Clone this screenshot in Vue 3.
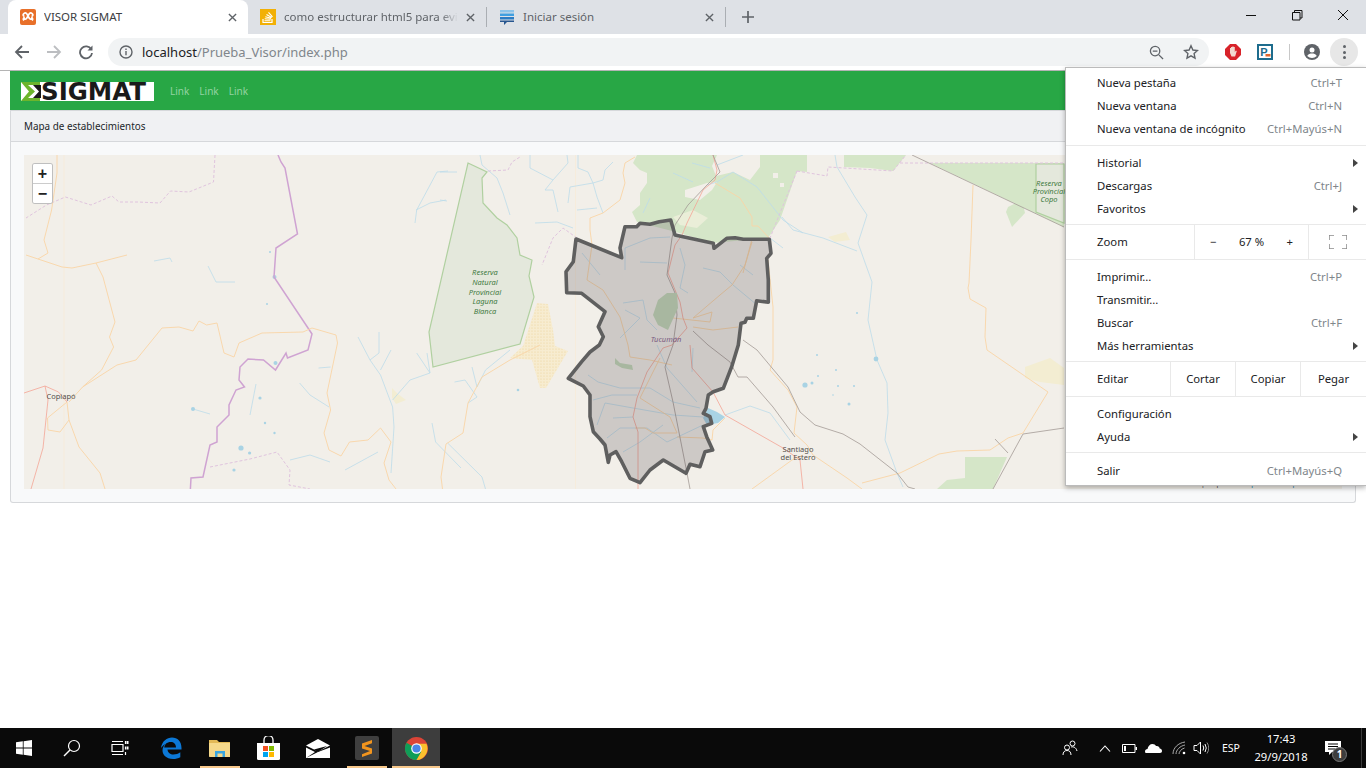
<template>
  <div class="screen">
    <header class="tabstrip">
      <div class="tab tab--active">
        <svg class="favicon" viewBox="0 0 16 16">
          <rect width="16" height="16" rx="2" fill="#e8702a" />
          <path d="M4 4.5c2-1.5 3 .5 4 2.5s2 4 4 2.5M12 4.5c-2-1.5-3 .5-4 2.5s-2 4-4 2.5M4 4.5c-1.5 1 -1 2.500 .5 3M12 4.500c1.500 1 1 2.500 -.5 3M4 11.500c-1 -1 -1 -2 .5 -3.500M12 11.500c1 -1 1 -2 -.5 -3.500" fill="none" stroke="#fff" stroke-width="1.700" />
        </svg>
        <span class="tab__title">VISOR SIGMAT</span>
        <svg class="tab__close" viewBox="0 0 10 10"><path d="M1 1l8 8M9 1l-8 8" /></svg>
      </div>
      <div class="tab">
        <svg class="favicon" viewBox="0 0 16 16">
          <rect width="16" height="16" fill="#f2b005" />
          <path d="M3 10v3.500h9V10" fill="none" stroke="#fff" stroke-width="1.200" />
          <path d="M4.500 11.800h6M4.700 9.800l6 .5M5.300 7.800l5.800 1.500M6.500 5.500l5.200 3M8.500 3.300l4 4.500" stroke="#fff" stroke-width="1.100" fill="none" />
        </svg>
        <span class="tab__title tab__title--fade">como estructurar html5 para evit</span>
        <svg class="tab__close" viewBox="0 0 10 10"><path d="M1 1l8 8M9 1l-8 8" /></svg>
      </div>
      <div class="tab tab--sep">
        <svg class="favicon" viewBox="0 0 16 16">
          <path d="M1 1h14v2.500H1z" fill="#8cc4ea" />
          <path d="M1 4.500h14V7H1z" fill="#3f9fe0" />
          <path d="M1 8h14v2.500H1z" fill="#2b7cc4" />
          <path d="M1 11.500h14V13H8l-3 3v-3H1z" fill="#27568f" />
        </svg>
        <span class="tab__title">Iniciar sesión</span>
        <svg class="tab__close" viewBox="0 0 10 10"><path d="M1 1l8 8M9 1l-8 8" /></svg>
      </div>
      <div class="tab-sep"></div>
      <svg class="newtab" viewBox="0 0 12 12"><path d="M6 0v12M0 6h12" /></svg>
      <div class="winctl">
        <svg viewBox="0 0 46 12"><path d="M18 6.500h10" /></svg>
        <svg viewBox="0 0 46 12"><path d="M18.500 3.500h7.500v7.500h-7.500zM20.500 3.500v-2h7.500v7.500h-2" /></svg>
        <svg viewBox="0 0 46 12"><path d="M18 1l10 10M28 1l-10 10" /></svg>
      </div>
    </header>

    <div class="toolbar">
      <svg class="navbtn" viewBox="0 0 16 16"><path d="M15 8H2M8 2L2 8l6 6" stroke="#5f6368" /></svg>
      <svg class="navbtn" viewBox="0 0 16 16"><path d="M1 8h13M8 2l6 6-6 6" stroke="#bcbec1" /></svg>
      <svg class="navbtn" viewBox="0 0 16 16">
        <path d="M13.300 5.500A6 6 0 1 0 14 9" stroke="#5f6368" />
        <path d="M14.500 1.500v5h-5z" fill="#5f6368" />
      </svg>
      <div class="omnibox">
        <svg class="omnibox__info" viewBox="0 0 14 14">
          <circle cx="7" cy="7" r="6" fill="none" stroke="#5f6368" stroke-width="1.400" />
          <path d="M7 6v4.300M7 3.500v1.400" stroke="#5f6368" stroke-width="1.400" />
        </svg>
        <span class="url"><b>localhost</b>/Prueba_Visor/index.php</span>
        <svg class="omnibox__zoom" viewBox="0 0 16 16">
          <circle cx="6.500" cy="6.500" r="5" fill="none" stroke="#5f6368" stroke-width="1.400" />
          <path d="M10.500 10.500L15 15M4 6.500h5" stroke="#5f6368" stroke-width="1.400" />
        </svg>
        <svg class="omnibox__star" viewBox="0 0 16 16">
          <path d="M8 1.800l1.900 4.200 4.600.5-3.400 3.100.9 4.500L8 11.800l-4 2.300.9-4.500L1.500 6.500l4.600-.5z" fill="none" stroke="#5f6368" stroke-width="1.400" />
        </svg>
      </div>
      <svg class="ext ext--stop" viewBox="0 0 16 16">
        <path d="M5 0h6l5 5v6l-5 5H5l-5-5V5z" fill="#d8232a" />
        <path d="M5 7V4h1v3-4h1.300v4-4.500h1.300V7 3h1.200v5l1-1.500 1 .5-1.700 5.500H6.500L5 9z" fill="#f3d9d0" />
      </svg>
      <svg class="ext ext--pub" viewBox="0 0 16 16">
        <rect width="16" height="16" fill="#1d6c8d" />
        <rect x="2" y="2" width="12" height="12" fill="#fff" />
        <text x="3.200" y="12" class="ext__p">P</text>
        <rect x="8.500" y="10" width="5" height="2.500" fill="#e0662a" />
      </svg>
      <div class="toolbar__sep"></div>
      <svg class="avatar" viewBox="0 0 16 16">
        <circle cx="8" cy="8" r="8" fill="#5f6368" />
        <circle cx="8" cy="6" r="2.500" fill="#fff" />
        <path d="M3.200 12c1-2 3-2.500 4.800-2.500s3.800.5 4.800 2.500c-3 2.500-6.600 2.500-9.600 0z" fill="#fff" />
      </svg>
      <div class="dots"><i></i><i></i><i></i></div>
    </div>

    <main class="page">
      <nav class="navbar">
        <div class="logo">
          <svg class="logo__sigma" viewBox="0 0 20 19">
            <path d="M12 3h8v13h-8l6-6.500z" fill="#1a1a1a" />
            <path d="M0 0h19v3H7l7 6.500L7 16h12v3H0l8-9.500z" fill="#6cb52c" />
          </svg>
          <span class="logo__text">SIGMAT</span>
        </div>
        <a class="navlink">Link</a>
        <a class="navlink">Link</a>
        <a class="navlink">Link</a>
      </nav>

      <section class="card">
        <div class="card__header">Mapa de establecimientos</div>
        <div class="card__body">
          <div class="map">
            <svg class="map__svg" viewBox="24 155 1318 334">
              <defs>
                <pattern id="sand" width="3" height="3" patternUnits="userSpaceOnUse">
                  <rect width="3" height="3" fill="#f7ecd0" />
                  <circle cx="1" cy="1" r=".6" fill="#ecd49a" />
                </pattern>
              </defs>

              <polygon class="forest" points="637,155 633,163 640,170 647,173 647,183 640,193 640,205 632,212 637,222 676,232 713,243 768,238 780,220 797,171 807,172 807,155" />
              <polygon class="hole" points="717,155 760,155 760,167 750,180 733,172 716,176 712,166" />
              <polygon class="hole" points="685,190 707,183 717,182 712,190 700,200 685,197" />
              <polygon class="hole hole--light" points="673,217 693,210 708,218 697,228 680,225" />
              <polygon class="hole" points="773,173 778,173 778,178 773,178" />
              <polygon class="hole" points="780,183 784,183 784,187 780,187" />
              <polygon class="forest" points="844,155 906,155 893,171 870,168 844,167" />
              <polygon class="forest" points="930,163 1064,163 1064,227" />
              <polygon class="forest" points="1022,200 1025,213 1012,227 1006,212 1008,207" />
              <polygon class="forest" points="965,457 1007,457 993,489 937,489 947,480 965,478" />
              <polygon class="reserve" points="1036,164 1064,164 1064,223 1036,212" />
              <polygon class="reserve" points="468,163 487,172 482,178 483,203 497,218 507,225 517,238 520,255 532,260 529,276 534,297 520,344 433,367 429,332" />
              <polygon class="sand" points="537,303 548,304 553,330 555,346 568,351 546,388 540,388 532,360 510,358 523,346" />
              <polygon class="sandlight" points="392,388 398,394 406,400 396,404 392,398" />
              <polygon class="sandlight" points="828,237 846,232 850,240 835,242" />
              <polygon class="sandlight" points="1025,367 1050,358 1064,368 1064,385 1040,382 1025,378" />
              <rect class="faint" x="63.500" y="155" width="1" height="334" />
              <rect class="faint" x="575" y="155" width="1" height="334" />

              <polyline v-for="(p, i) in rivers" :key="'r' + i" class="river" :points="p" />
              <polygon v-for="(p, i) in lakes" :key="'l' + i" class="lake" :points="p" />
              <circle v-for="(c, i) in ponds" :key="'p' + i" class="lake" :cx="c[0]" :cy="c[1]" :r="c[2]" />

              <polyline v-for="(p, i) in borders" :key="'d' + i" class="border-dash" :points="p" />
              <polyline class="border-main" points="278,155 281,162 285,168 297.500,234 276,248 274,277 312,334 308,350 287.500,358 286,353 275.500,370 263.500,360 248,359 240,367 239,380 244.500,387 236,390 229,405 229,415 217,427 217,442 210,445 203,477 191,478 190.400,489" />

              <polyline v-for="(p, i) in roads" :key="'o' + i" class="road" :points="p" />
              <polyline v-for="(p, i) in redRoads" :key="'e' + i" class="road-red" :points="p" />
              <polyline v-for="(p, i) in grayRoads" :key="'g' + i" class="road-gray" :points="p" />

              <polygon class="forest-in" points="667,293 677,293 678,308 668,330 658,325 653,315 658,300" />
              <polygon class="forest-in" points="615,358 620,363 632,365 633,370 622,368 615,364" />

              <polygon class="province" :points="tucuman" />

              <text class="label" x="61" y="399" text-anchor="middle">Copiapó</text>
              <text class="label" x="798" y="452" text-anchor="middle">Santiago</text>
              <text class="label" x="798" y="460" text-anchor="middle">del Estero</text>
              <text class="label label--city" x="666" y="342" text-anchor="middle">Tucumán</text>
              <text class="label label--park" x="485" y="275" text-anchor="middle">Reserva</text>
              <text class="label label--park" x="485" y="285" text-anchor="middle">Natural</text>
              <text class="label label--park" x="485" y="294.500" text-anchor="middle">Provincial</text>
              <text class="label label--park" x="485" y="304" text-anchor="middle">Laguna</text>
              <text class="label label--park" x="485" y="314" text-anchor="middle">Blanca</text>
              <text class="label label--park" x="1049" y="186" text-anchor="middle">Reserva</text>
              <text class="label label--park" x="1049" y="194" text-anchor="middle">Provincial</text>
              <text class="label label--park" x="1049" y="202" text-anchor="middle">Copo</text>
            </svg>
            <div class="zoomctl">
              <button class="zoomctl__btn">+</button>
              <button class="zoomctl__btn">−</button>
            </div>
            <div class="attribution"><span>Leaflet</span> | Map data © <span>OpenStreetMap</span> contributors</div>
          </div>
        </div>
      </section>
    </main>

    <div class="menu">
      <div class="menu__group menu__group--first">
        <div class="menu__row">Nueva pestaña<span>Ctrl+T</span></div>
        <div class="menu__row">Nueva ventana<span>Ctrl+N</span></div>
        <div class="menu__row">Nueva ventana de incógnito<span>Ctrl+Mayús+N</span></div>
      </div>
      <div class="menu__group">
        <div class="menu__row menu__row--sub">Historial</div>
        <div class="menu__row">Descargas<span>Ctrl+J</span></div>
        <div class="menu__row menu__row--sub">Favoritos</div>
      </div>
      <div class="menu__split menu__split--zoom">
        <div class="menu__cell menu__cell--label">Zoom</div>
        <div class="menu__cell menu__cell--zoom"><i>−</i><em>67 %</em><i>+</i></div>
        <div class="menu__cell">
          <svg class="fullscreen" viewBox="0 0 18 14"><path d="M0 5V0h5M13 0h5v5M18 9v5h-5M5 14H0V9" /></svg>
        </div>
      </div>
      <div class="menu__group">
        <div class="menu__row">Imprimir...<span>Ctrl+P</span></div>
        <div class="menu__row">Transmitir...</div>
        <div class="menu__row">Buscar<span>Ctrl+F</span></div>
        <div class="menu__row menu__row--sub">Más herramientas</div>
      </div>
      <div class="menu__split menu__split--edit">
        <div class="menu__cell menu__cell--label">Editar</div>
        <div class="menu__cell">Cortar</div>
        <div class="menu__cell">Copiar</div>
        <div class="menu__cell">Pegar</div>
      </div>
      <div class="menu__group">
        <div class="menu__row">Configuración</div>
        <div class="menu__row menu__row--sub">Ayuda</div>
      </div>
      <div class="menu__group menu__group--last">
        <div class="menu__row">Salir<span>Ctrl+Mayús+Q</span></div>
      </div>
    </div>

    <footer class="taskbar">
      <div class="task task--sys">
        <svg width="16" height="16" viewBox="0 0 16 16"><path d="M0 2.300l6.800-1v6.300H0zM7.600 1.200L16 0v7.600H7.600zM0 8.400h6.800v6.300L0 13.700zM7.600 8.400H16V16l-8.400-1.200z" fill="#fff" /></svg>
      </div>
      <div class="task task--sys">
        <svg width="18" height="18" viewBox="0 0 18 18"><circle cx="11" cy="7" r="5.500" fill="none" stroke="#fff" stroke-width="1.200" /><path d="M7 11l-6 6" stroke="#fff" stroke-width="1.400" /></svg>
      </div>
      <div class="task task--sys task--gap">
        <svg width="18" height="16" viewBox="0 0 18 16"><path d="M1 4.500h11v7H1zM1 1.500h11M1 14.500h11M14.500 1v3M14.500 6.500v3M14.500 12v3" fill="none" stroke="#fff" stroke-width="1.200" /><path d="M15.500 6.500h2v3h-2zM15.500 1h2v3h-2z" fill="#fff" /></svg>
      </div>
      <div class="task">
        <svg width="22" height="22" viewBox="0 0 22 22">
          <path d="M1 11C2 4 7 .5 12 .5c5.500 0 9.500 4 9.500 10.500v1.500H7.500c.3 3.500 3 5 5.800 5 2.700 0 5-1 7-2.300v5c-2 1.200-4.500 1.800-7.300 1.800-7 0-10.500-4.500-10.500-8.500 0-3 1.500-5.500 4-7.500-1.500 2-2 3-2.300 4.500h11.800c0-3-1.700-5.500-5-5.500C8.500 4.500 4 7 1 11z" fill="#0c78d6" />
        </svg>
      </div>
      <div class="task task--open">
        <svg width="22" height="20" viewBox="0 0 22 20">
          <path d="M0 2h8l2 2h11v14.500H0z" fill="#e3b956" />
          <path d="M0 5h21v14H1q-1 0-1-1z" fill="#f6d98a" />
          <path d="M6 19v-6h10v6h-2.500v-3.500h-5V19z" fill="#3ba7e0" />
        </svg>
      </div>
      <div class="task">
        <svg width="23" height="24" viewBox="0 0 23 24">
          <path d="M7 7V4a4.500 4.500 0 0 1 9 0v3" fill="none" stroke="#fff" stroke-width="1.300" />
          <path d="M0 7h23v15.500q0 1.500-1.500 1.500h-20Q0 24 0 22.500z" fill="#fff" />
          <rect x="6" y="10" width="5" height="5" fill="#f25022" />
          <rect x="12" y="10" width="5" height="5" fill="#7fba00" />
          <rect x="6" y="16" width="5" height="5" fill="#00a4ef" />
          <rect x="12" y="16" width="5" height="5" fill="#ffb900" />
        </svg>
      </div>
      <div class="task">
        <svg width="24" height="19" viewBox="0 0 24 19">
          <path d="M0 6.500L12 0l12 6.500-12 6z" fill="#fff" />
          <path d="M0 8.500l9 4.500L0 19zM24 8.500V19H0l12-6z" fill="#fff" />
          <path d="M8 10.500l13-3.500-9 6z" fill="#0a0a0a" />
        </svg>
      </div>
      <div class="task task--open">
        <svg width="24" height="24" viewBox="0 0 24 24">
          <rect width="24" height="24" rx="2" fill="#3f3f3f" />
          <path d="M17 4L7 7.500v5l8 2.500-8 3.200V21l10-3.500v-5L9.500 10 17 7.200z" fill="#f2951e" />
        </svg>
      </div>
      <div class="task task--open task--active">
        <svg width="23" height="23" viewBox="0 0 24 24">
          <circle cx="12" cy="12" r="12" fill="#db4437" />
          <path d="M12 12L1.600 6A12 12 0 0 0 12 24l5.500-9z" fill="#0f9d58" />
          <path d="M12 7h10.400A12 12 0 0 1 12 24l5-8.500z" fill="#fbc02d" />
          <circle cx="12" cy="12" r="5.500" fill="#fff" />
          <circle cx="12" cy="12" r="4.300" fill="#4a86e8" />
        </svg>
      </div>
      <div class="tray">
        <svg class="tray__people" width="16" height="16" viewBox="0 0 16 16"><circle cx="10.500" cy="3.500" r="2.500" fill="none" stroke="#fff" /><circle cx="5" cy="7.500" r="2.500" fill="none" stroke="#fff" /><path d="M1 15c0-3 1.500-4.500 4-4.500S9 12 9 15M9 7c2-.5 5 0 6 4" fill="none" stroke="#fff" /></svg>
        <svg class="tray__chev" width="12" height="7" viewBox="0 0 12 7"><path d="M1 6.500L6 1l5 5.500" fill="none" stroke="#fff" stroke-width="1.100" /></svg>
        <svg class="tray__batt" width="15" height="9" viewBox="0 0 15 9"><path d="M.500.500h12.500v8H.500z" fill="none" stroke="#fff" /><path d="M2 2h2v5H2z" fill="#fff" /><path d="M13.500 3H15v3h-1.500z" fill="#fff" /></svg>
        <svg class="tray__cloud" width="17" height="10" viewBox="0 0 17 10"><path d="M1 10q-1 0-1-1.500C0 7 1 6 2.500 6 3 3 5 1 7.500 1c1.500 0 3 .8 3.500 2 2-.5 3.500.7 3.700 2.500C16 5.500 17 6.800 17 8c0 1.200-.7 2-2 2z" fill="#fff" /></svg>
        <svg class="tray__wifi" width="14" height="14" viewBox="0 0 14 14"><path d="M1 13C1 7 6 2 13 1M4 13c0-4 4-8 9-9M7 13c0-2 2-5 5.500-6" fill="none" stroke="#aaa" /><circle cx="12" cy="12" r="1.300" fill="#fff" /></svg>
        <svg class="tray__vol" width="16" height="14" viewBox="0 0 16 14"><path d="M1 4.500h3L7.500 1v12L4 9.500H1z" fill="none" stroke="#fff" /><path d="M10 4.500q1.500 2.500 0 5M12 3q2.500 4 0 8" fill="none" stroke="#fff" /><path d="M14 1.500q3.500 5.500 0 11" fill="none" stroke="#888" /></svg>
        <span class="tray__lang">ESP</span>
        <div class="tray__clock"><span>17:43</span><span>29/9/2018</span></div>
        <div class="tray__notif">
          <svg width="16" height="14" viewBox="0 0 16 14"><path d="M0 0h16v11H7l-3 3v-3H0z" fill="#fff" /><path d="M3 3h10M3 5.500h10M3 8h7" stroke="#000" /></svg>
          <b class="tray__badge">1</b>
        </div>
      </div>
    </footer>
  </div>
</template>

<script setup>
// borde de la provincia, coordenadas de pantalla
const tucuman =
  "576,239 621.700,257.700 620,248 625,226.700 636.700,226.700 640,223.300 650,224.300 659.300,221.700 670.700,220 675,235 713.300,243.300 714,248.300 726.700,238.300 735,237.700 743.300,239.300 769.300,239.300 771,253.300 766.700,258.300 768.300,280 768.300,302.300 756.700,300.700 753.300,318.300 746.700,318.300 745,322.300 741,323.300 738.300,345 731.700,366.700 723.300,388.300 713.300,391.700 708.300,395 706,408.300 703.300,413.300 710,416.700 711.700,423.300 703.300,426.700 706.700,436.700 712.700,450 705,451.700 700,466.700 690,464.300 686,473.300 663.300,460 650,470 640,482.700 630,478.300 621.700,461.700 616,451.700 610,455 608.300,462.300 605,445 600,439 593.300,431.700 590,416.700 590,395 583.300,386 568.300,378.300 581.700,361.700 590,352 599.300,345 603.300,336.700 598.300,326.700 605,311.700 581.700,293.300 566.700,292.700 566,271.700 573.300,261.700";

const borders = [
  "215,155 213.500,182 189,192 170.500,191 160,203 138,202 119,202 112,196 91,205 65.400,197 46.500,205 26,218",
  "577,238 563,228 553,238 542,265",
  "488,171 508,170 512,162 520,157",
  "797,171 827,176 828,167 893,171 906,155",
  "900,163 1064,163",
  "797,171 770,238",
  "210,467 250,459 277,452 290,470 289,485 310,489",
];

const roads = [
  "57,155 57,173 51.600,210 44,240 48,253 38,259 26,255",
  "38,259 62,267 72,268 96,263 127,255",
  "96,263 103,277 115,322 109.500,337 113.600,347 101.600,370 82.600,387 69,402",
  "82.600,387 117,365 136,360 162,328 179,327 193,331 199,321 206.600,325 217,323 224,353 234,357 239,343 262,333 303,332 312,328 336,335 337.500,343 327,393 330.600,410 324,433 329,450 341,456 349.500,442 368,440 380.500,428 391,442 384,463 389,480 396,489",
  "67,402 69,420 60,432 48,430 47.500,418 67,402",
  "69,420 79,447 100,473 105,489",
  "540,345 510,360 482,377 468,403 463,433 446,444 441,477 442.500,489",
  "635,157 625,163 623,173 625,183 620,200 603,213 590,218 590,230 592,245 587,280 603,290 620,317 628,345 630,357 650,360 672,365",
  "673,318 710,322 712,312 693,318 720,295 732,285 745,265 752,242",
  "693,327 713,330 738,327",
  "660,358 640,398 670,417 677,433 653,433 645,428 635,428",
  "677,437 703,438 712,440 713,430 725,418",
  "715,183 740,198 752,217 752,226 758,226 770,239 752,239 743,273",
  "973,185 971,240 969,283 968,288 970,299 986,308 985,337 987,350 1048,392 1023,433 1008,438 990,450 957,451 939,454 900,473 862,483",
  "768,260 773,307 773,360 770,370 788,390 797,407 794,433 807,445 813,455 847,478 862,489",
  "752,489 792,460 803,455",
];

const redRoads = [
  "713,155 717,170 715,180 703,190 687,223 682,235 675,245 668,273 680,302 683,318 687,328 672,345 663,348 647,372 637,398 633,417 638,432 638,462 638,489",
  "690,345 692,368 713,392 725,415 783,448 800,460 803,489",
  "24,393 45,386 58.500,392 67,402",
  "45,386 48,400 43,448 31,489",
];

const grayRoads = [
  "713,155 720,172 707,185 688,205 675,225 672,238 667,275 675,293 677,315 673,345 665,367 673,402 687,473 690,489",
  "693,331 708,345 730,362 738,377 747,377 773,407 795,437",
  "743,340 757,350 788,387 800,412 815,425 843,434 860,444 897,473 908,487 915,489",
  "912,155 1064,227",
  "1064,428 1023,434 993,489",
  "995,439 1008,453",
];

const rivers = [
  "358,337 370,360 380.500,375 392.600,407 394,427 391,473",
  "379,332 379,353 370,360",
  "391,350 380.500,370",
  "427,353 430,373 410,380 392.600,400",
  "416.700,353 430,373",
  "448,171 437,172 416.700,210 415,223",
  "416,210 430,203 446,200",
  "480,155 482,165 497,178 503,193 510,215",
  "454.500,382 465,380 477,397 468,403",
  "510,350 485.500,370 477,387 472,367",
  "432,423 435.600,442 461,468",
  "447.600,443 482,477 485.500,489",
  "299.600,383 310,395 329,407",
  "318.500,368 330.600,367",
  "193,409 210,414",
  "154,261 170,258 172,262",
  "208,266 216,282 235,282",
  "440,172 457,172",
  "440,200 447,201",
  "530,155 530,168 553,180 545,190 553,190 558,212",
  "567,155 568,163 553,180",
  "578,155 578,168 588,172 593,183 570,187 568,203",
  "593,183 603,180 605,170 613,162",
  "593,183 597,197 603,213",
  "577,210 597,208",
  "535,223 557,222 573,228",
  "650,198 643,213",
  "673,173 693,182",
  "692,163 710,168",
  "707,185 717,182 733,172 757,187 783,220 803,233",
  "717,165 743,155",
  "588,375 598,382 620,388 650,388 673,402 700,408",
  "593,400 612,395 637,395",
  "597,425 605,403 633,408 673,415 703,417",
  "613,418 633,417",
  "607,438 620,428 647,428 667,442 703,425",
  "623,452 640,442 663,425",
  "657,345 667,368 697,402",
  "692,372 693,348",
  "625,270 625,248 650,238 670,237",
  "640,262 667,263",
  "582,253 600,275",
  "623,303 643,300 647,320 657,330",
  "625,310 640,318 620,338",
  "703,268 720,272 733,285 757,305",
  "740,265 753,275",
  "680,248 685,265 680,288 688,293",
  "835,155 837,167 855,197 867,215 858,243 872,282 868,320 877,360 887,383 888,413 885,440 897,473 903,487",
  "782,217 793,230 823,238 857,251",
  "770,238 783,248",
  "725,415 750,406 770,413 790,440",
  "250,415 256,384",
  "290,460 310,455 330,462",
  "345,470 378,452",
];

const lakes = ["708,408 717,412 725,417 718,423 707,425 703,418"];

const ponds = [
  [270, 252, 1], [274.5, 277, 2], [267, 304, 1], [193, 409, 2], [260, 398, 1.6], [241, 448, 2.6], [249.6, 453, 1.6],
  [265, 423, 1.2], [274.5, 433, 1.2], [234, 470, 1.6], [518, 390, 1.3], [275.5, 363, 2], [876, 359, 2.4], [857, 313, 1],
  [805, 385, 2.6], [812, 383, 1.5], [817, 355, 1], [836, 370, 1], [818, 376, 1], [838, 386, 1], [854, 386, 1],
  [849, 404, 1.5], [833, 395, 0.8],
];
</script>

<style>
html,
body {
  margin: 0;
  background: #fff;
}
</style>

<style scoped>
.screen {
  position: relative;
  display: flex;
  flex-direction: column;
  width: 1366px;
  height: 768px;
  overflow: hidden;
  font-family: "Noto Sans", sans-serif;
  color: #202124;
}

/* pestañas */
.tabstrip {
  display: flex;
  align-items: center;
  height: 34px;
  padding-left: 8px;
  background: #dee1e6;
  flex: none;
}

.tab {
  display: flex;
  align-items: center;
  width: 238px;
  height: 34px;
  padding: 0 11px 0 12px;
  box-sizing: border-box;
  font-size: 11.500px;
  color: #5f6368;
  flex: none;
}

.tab--active {
  width: 240px;
  background: #fff;
  border-radius: 8px 8px 0 0;
  color: #3c4043;
}

.tab--sep,
.tab-sep {
  border-left: 1px solid #aaaeb3;
  background-clip: padding-box;
}

.tab--sep {
  height: 20px;
  width: 239px;
}

.tab-sep {
  width: 0;
  height: 20px;
}

.favicon {
  width: 16px;
  height: 16px;
  flex: none;
}

.tab__title {
  margin-left: 8px;
  padding-bottom: 2px;
  flex: 1;
  white-space: nowrap;
  overflow: hidden;
}

.tab__title--fade {
  -webkit-mask-image: linear-gradient(90deg, #000 90%, transparent);
  mask-image: linear-gradient(90deg, #000 90%, transparent);
}

.tab__close {
  width: 9px;
  height: 9px;
  margin-left: 8px;
  flex: none;
}

.tab__close path {
  stroke: #5f6368;
  stroke-width: 1.500;
}

.newtab {
  width: 12px;
  height: 12px;
  margin-left: 16px;
}

.newtab path {
  stroke: #5f6368;
  stroke-width: 1.700;
}

.winctl {
  display: flex;
  margin-left: auto;
  margin-right: 0;
  padding-bottom: 5px;
}

.winctl svg {
  width: 46px;
  height: 12px;
}

.winctl path {
  fill: none;
  stroke: #111;
  stroke-width: 1;
}

/* barra de direcciones */
.toolbar {
  display: flex;
  align-items: center;
  height: 36px;
  padding: 0 8px 0 14px;
  background: #fff;
  border-bottom: 1px solid #b4b4b4;
  flex: none;
}

.navbtn {
  width: 16px;
  height: 16px;
  margin-right: 16px;
  flex: none;
}

.navbtn path {
  fill: none;
  stroke-width: 1.800;
}

.navbtn path[fill] {
  stroke: none;
  fill: #5f6368;
}

.omnibox {
  display: flex;
  align-items: center;
  width: 1101px;
  height: 28px;
  margin-left: -2px;
  padding: 0 10px 0 11px;
  box-sizing: border-box;
  background: #f1f3f4;
  border-radius: 14px;
  flex: none;
}

.omnibox__info {
  width: 14px;
  height: 14px;
  flex: none;
}

.url {
  margin-left: 9px;
  font-size: 13px;
  color: #80868b;
  white-space: nowrap;
}

.url b {
  font-weight: 400;
  color: #202124;
}

.omnibox__zoom {
  width: 15px;
  height: 15px;
  margin-left: auto;
}

.omnibox__star {
  width: 16px;
  height: 16px;
  margin-left: 19px;
  margin-right: 0;
}

.ext {
  width: 16px;
  height: 16px;
  flex: none;
}

.ext--stop {
  margin-left: 16px;
}

.ext--pub {
  margin-left: 16px;
}

.ext__p {
  font: 700 11px "Liberation Sans", sans-serif;
  fill: #1d6c8d;
}

.toolbar__sep {
  width: 1px;
  height: 16px;
  margin-left: 16px;
  background: #c8c8c8;
  flex: none;
}

.avatar {
  width: 16px;
  height: 16px;
  margin-left: 14px;
  flex: none;
}

.dots {
  display: flex;
  flex-direction: column;
  align-items: center;
  justify-content: center;
  gap: 2.500px;
  width: 28px;
  height: 28px;
  margin-left: 10px;
  border-radius: 50%;
  background: #e7e7e7;
  flex: none;
}

.dots i {
  width: 3px;
  height: 3px;
  border-radius: 50%;
  background: #5f6368;
}

/* pagina */
.page {
  flex: 1;
  padding: 0 10px;
  background: #fff;
  min-height: 0;
}

.navbar {
  display: flex;
  align-items: center;
  height: 39px;
  padding-left: 11px;
  background: #28a745;
  box-sizing: border-box;
}

.logo {
  display: flex;
  align-items: center;
  width: 133px;
  height: 19px;
  background: #fff;
  margin-top: 2px;
  flex: none;
}

.logo__sigma {
  width: 20px;
  height: 19px;
  flex: none;
}

.logo__text {
  font: 700 24.500px/19px "DejaVu Sans", sans-serif;
  color: #1a1a1a;
  white-space: nowrap;
}

.navlink {
  margin-left: 10px;
  font-size: 10px;
  color: #93d3a2;
}

.logo + .navlink {
  margin-left: 16px;
}

.card {
  height: 393px;
  box-sizing: border-box;
  border: 1px solid #d6d8db;
  border-top: 0;
  border-radius: 0 0 3px 3px;
  background: #f8f9fa;
  display: flex;
  flex-direction: column;
}

.card__header {
  height: 32px;
  box-sizing: border-box;
  padding: 0 13px;
  display: flex;
  align-items: center;
  background: #f0f1f3;
  border-top: 1px solid #d6d8db;
  border-bottom: 1px solid #d6d8db;
  font-size: 9.900px;
  color: #212529;
  flex: none;
}

.card__body {
  flex: 1;
  padding: 13px;
  min-height: 0;
}

.map {
  position: relative;
  height: 334px;
  background: #f2efe9;
  overflow: hidden;
}

.map__svg {
  display: block;
  width: 1318px;
  height: 334px;
}

.forest {
  fill: #d5e6c8;
}

.hole {
  fill: #f2efe9;
}

.hole--light {
  fill: #eaeed8;
}

.forest-in {
  fill: #c4d9ba;
}

.reserve {
  fill: #e4e8dc;
  stroke: #b0d0a0;
  stroke-width: 1.200;
}

.sand {
  fill: url(#sand);
}

.sandlight {
  fill: #f3edd2;
}

.faint {
  fill: #f6ecdc;
}

.river {
  fill: none;
  stroke: #bddcea;
  stroke-width: 0.800;
}

.lake {
  fill: #a9d3e4;
}

.border-dash {
  fill: none;
  stroke: #e0c4de;
  stroke-width: 1;
  stroke-dasharray: 3 2;
}

.border-main {
  fill: none;
  stroke: #cfa3d2;
  stroke-width: 1.500;
}

.road {
  fill: none;
  stroke: #f9d5a6;
  stroke-width: 0.900;
}

.road-red {
  fill: none;
  stroke: #f4a595;
  stroke-width: 0.800;
}

.road-gray {
  fill: none;
  stroke: #a39a96;
  stroke-width: 0.800;
}

.province {
  fill: rgba(60, 50, 58, 0.2);
  stroke: #5f5f5f;
  stroke-width: 3.600;
  stroke-linejoin: round;
}

.label {
  font: 7.500px "Noto Sans", sans-serif;
  fill: #55504c;
}

.label--city {
  font-style: italic;
  fill: #7a5a80;
}

.label--park {
  font-style: italic;
  fill: #3f7a3f;
}

.zoomctl {
  position: absolute;
  top: 8px;
  left: 8px;
  display: flex;
  flex-direction: column;
  border: 1px solid rgba(0, 0, 0, 0.25);
  border-radius: 3px;
  background: #fff;
  overflow: hidden;
}

.zoomctl__btn {
  display: block;
  width: 19px;
  height: 19px;
  padding: 0;
  border: 0;
  background: #fff;
  font: 700 16px/17px "Liberation Sans", sans-serif;
  color: #222;
}

.zoomctl__btn + .zoomctl__btn {
  height: 20px;
  border-top: 1px solid #ccc;
}

.attribution {
  position: absolute;
  right: 4px;
  bottom: 0;
  font-size: 6.800px;
  line-height: 10px;
  color: #333;
  white-space: nowrap;
}

.attribution span {
  color: #0078a8;
}

/* menu de chrome */
.menu {
  position: absolute;
  top: 67px;
  left: 1065px;
  width: 301px;
  box-sizing: border-box;
  background: #fff;
  border: 1px solid #bbb;
  border-right: 0;
  box-shadow: 0 2px 5px rgba(0, 0, 0, 0.3);
  font-size: 11.300px;
  color: #202124;
}

.menu__group {
  padding: 5px 0 4px;
  border-bottom: 1px solid #e9e9e9;
}

.menu__group--first {
  padding: 3px 0 5px;
}

.menu__group--last {
  padding: 6px 0 3px;
  border-bottom: 0;
}

.menu__row {
  position: relative;
  display: flex;
  align-items: center;
  justify-content: space-between;
  height: 23px;
  padding: 0 24px 0 31px;
}

.menu__row span {
  color: #80868b;
}

.menu__row--sub::after {
  content: "";
  position: absolute;
  right: 8px;
  top: 8px;
  border-left: 5px solid #444;
  border-top: 4px solid transparent;
  border-bottom: 4px solid transparent;
}

.menu__split {
  display: grid;
  height: 34px;
  border-bottom: 1px solid #e9e9e9;
}

.menu__split--zoom {
  grid-template-columns: 128px 114px 1fr;
}

.menu__split--edit {
  grid-template-columns: 104px 65px 65px 1fr;
}

.menu__cell {
  display: flex;
  align-items: center;
  justify-content: center;
  border-left: 1px solid #e9e9e9;
  padding-bottom: 1px;
}

.menu__cell--label {
  justify-content: flex-start;
  padding-left: 31px;
  border-left: 0;
}

.menu__cell--zoom {
  justify-content: space-between;
  padding: 0 15px 2px;
}

.menu__cell i,
.menu__cell em {
  font-style: normal;
}

.fullscreen {
  width: 18px;
  height: 14px;
}

.fullscreen path {
  fill: none;
  stroke: #8a8a8a;
  stroke-width: 1.500;
}

/* barra de tareas */
.taskbar {
  display: flex;
  align-items: center;
  height: 40px;
  background: #0a0a0a;
  flex: none;
}

.task {
  position: relative;
  display: flex;
  align-items: center;
  justify-content: center;
  width: 49px;
  height: 40px;
  box-sizing: border-box;
  flex: none;
}

.task--sys {
  width: 48px;
}

.task--gap {
  margin-right: 2px;
}

.task--open::after {
  content: "";
  position: absolute;
  left: 5px;
  right: 4px;
  bottom: 0;
  height: 2px;
  background: #f7c88b;
}

.task--active {
  width: 48px;
  margin-left: 1px;
  background: #3d3d3d;
}

.task--active::after {
  left: 0;
  right: 0;
}

.tray {
  display: flex;
  align-items: center;
  margin-left: auto;
  height: 40px;
  padding-right: 4px;
  color: #fff;
  font-size: 11.500px;
}

.tray__chev {
  margin-left: 21px;
}

.tray__batt {
  margin-left: 11px;
}

.tray__cloud {
  margin-left: 8px;
}

.tray__wifi {
  margin-left: 10px;
}

.tray__vol {
  margin-left: 7px;
}

.tray__lang {
  margin-left: 13px;
  width: 24px;
  font-size: 10.500px;
}

.tray__clock {
  display: flex;
  flex-direction: column;
  align-items: center;
  width: 60px;
  margin-left: 5px;
  font-size: 11.200px;
  line-height: 18px;
}

.tray__notif {
  position: relative;
  width: 41px;
  margin-left: 10px;
  padding-left: 4px;
  box-sizing: border-box;
  display: flex;
  align-items: center;
  height: 40px;
  border-right: 1px solid #3a3a3a;
}

.tray__badge {
  position: absolute;
  left: 11px;
  top: 19px;
  width: 15px;
  height: 15px;
  border-radius: 50%;
  background: #3d3d3d;
  border: 1px solid #777;
  box-sizing: border-box;
  font-size: 10px;
  line-height: 13px;
  text-align: center;
  color: #fff;
}
</style>
